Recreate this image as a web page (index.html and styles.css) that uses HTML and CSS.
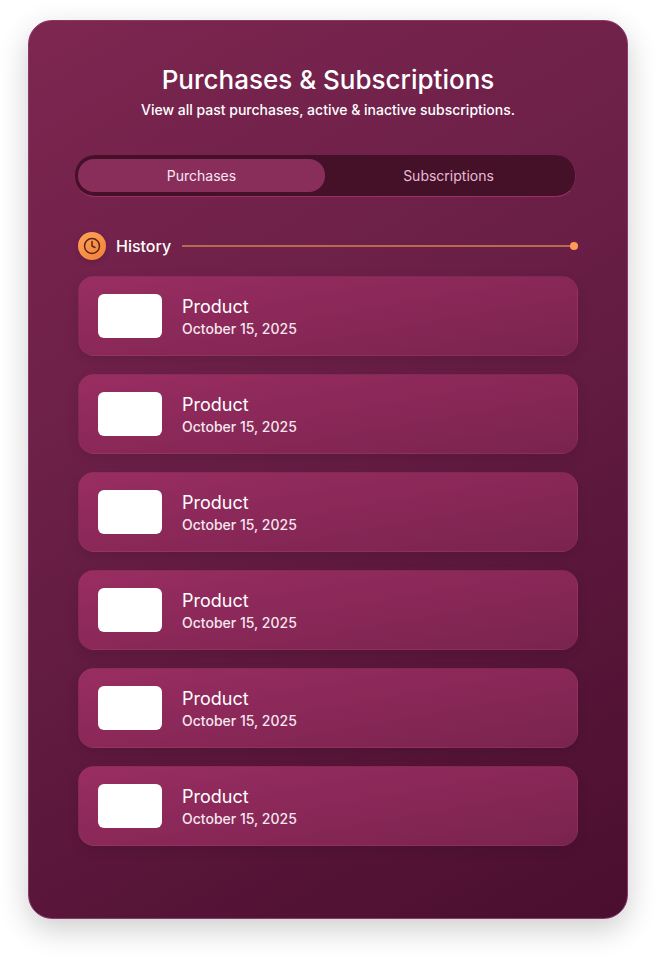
FILE: index.html
```html
<!DOCTYPE html>
<html lang="en">
<head>
<meta charset="utf-8">
<title>Purchases &amp; Subscriptions</title>
<link rel="stylesheet" href="styles.css">
</head>
<body>
<main class="panel">
  <header class="head">
    <h1 class="title">Purchases &amp; Subscriptions</h1>
    <p class="subtitle">View all past purchases, active &amp; inactive subscriptions.</p>
  </header>
  <div class="tabs">
    <button class="tab tab-active">Purchases</button>
    <button class="tab">Subscriptions</button>
  </div>
  <section class="history">
    <div class="section-head">
      <span class="badge">
        <svg width="18" height="18" viewBox="0 0 24 24" fill="none" stroke="#5a2412" stroke-width="2" stroke-linecap="round" stroke-linejoin="round"><circle cx="12" cy="12" r="10"/><path d="M12 6v6l4 2"/></svg>
      </span>
      <span class="section-label">History</span>
      <span class="rule"></span>
    </div>
    <ul class="list">
      <li class="item"><div class="thumb"></div><div class="info"><div class="name">Product</div><div class="date">October 15, 2025</div></div></li>
      <li class="item"><div class="thumb"></div><div class="info"><div class="name">Product</div><div class="date">October 15, 2025</div></div></li>
      <li class="item"><div class="thumb"></div><div class="info"><div class="name">Product</div><div class="date">October 15, 2025</div></div></li>
      <li class="item"><div class="thumb"></div><div class="info"><div class="name">Product</div><div class="date">October 15, 2025</div></div></li>
      <li class="item"><div class="thumb"></div><div class="info"><div class="name">Product</div><div class="date">October 15, 2025</div></div></li>
      <li class="item"><div class="thumb"></div><div class="info"><div class="name">Product</div><div class="date">October 15, 2025</div></div></li>
    </ul>
  </section>
</main>
</body>
</html>
```
FILE: styles.css
```css
* { box-sizing: border-box; }
html, body { margin: 0; padding: 0; height: 100%; }
body {
  background: #fff;
  font-family: Inter, "Liberation Sans", sans-serif;
  color: #fff;
  overflow: hidden;
  padding: 20px 32px 0 28px;
}
.panel {
  width: 600px;
  height: 899px;
  border-radius: 24px;
  border: 1px solid #8a3a68;
  background: linear-gradient(150deg, #7d2650 0%, #6a1f47 40%, #4a0e2e 100%);
  box-shadow: 0 10px 30px rgba(0,0,0,.2);
  padding: 44px 49px 0;
}
.head { text-align: center; }
.title {
  margin: 0;
  font-size: 26px;
  line-height: 30px;
  font-weight: 500;
  color: #fff;
}
.subtitle {
  margin: 6px 0 0;
  font-size: 14px;
  line-height: 17px;
  font-weight: 500;
  color: #fff;
}
.tabs {
  display: flex;
  margin: 37px 2px 0 -3px;
  height: 42px;
  padding: 4px 3px;
  border-radius: 20px;
  background: #451129;
  border-bottom: 1px solid #a12c66;
  border-right: 1px solid #7a2452;
}
.tab {
  flex: 1;
  border: 0;
  background: transparent;
  font: 400 14px/17px Inter, "Liberation Sans", sans-serif;
  color: #e8bcd4;
  border-radius: 16px;
  padding: 0;
}
.tab-active {
  background: #892e5b;
  color: #f8e6f0;
  height: 33px;
}
.history { margin-top: 35px; }
.section-head { display: flex; align-items: center; height: 28px; }
.badge {
  width: 28px;
  height: 28px;
  border-radius: 50%;
  background: linear-gradient(145deg, #ffa45c, #f27f35);
  display: flex;
  align-items: center;
  justify-content: center;
  box-shadow: 0 2px 6px rgba(0,0,0,.15);
}
.section-label {
  margin-left: 10px;
  font-size: 16px;
  font-weight: 500;
  line-height: 20px;
  color: #fff;
}
.rule {
  flex: 1;
  position: relative;
  margin-left: 11px;
  height: 2px;
  background: #b96a4d;
}
.rule::after {
  content: "";
  position: absolute;
  right: 0;
  top: -3px;
  width: 8px;
  height: 8px;
  border-radius: 50%;
  background: #ff9a55;
}
.list {
  list-style: none;
  margin: 16px 0 0;
  padding: 0;
  display: flex;
  flex-direction: column;
  gap: 18px;
}
.item {
  height: 80px;
  border-radius: 16px;
  background: linear-gradient(170deg, #992d61 0%, #7a234f 100%);
  border: 1px solid rgba(255,255,255,.02);
  box-shadow: 0 4px 12px rgba(0,0,0,.1);
  display: flex;
  align-items: center;
  padding-left: 19px;
  gap: 20px;
}
.thumb {
  width: 64px;
  height: 44px;
  background: #fff;
  border-radius: 6px;
}
.name { font-size: 18px; line-height: 22px; font-weight: 400; color: #fff; }
.date { font-size: 14px; line-height: 17px; font-weight: 500; color: #f6e6ee; margin-top: 2px; }
```
